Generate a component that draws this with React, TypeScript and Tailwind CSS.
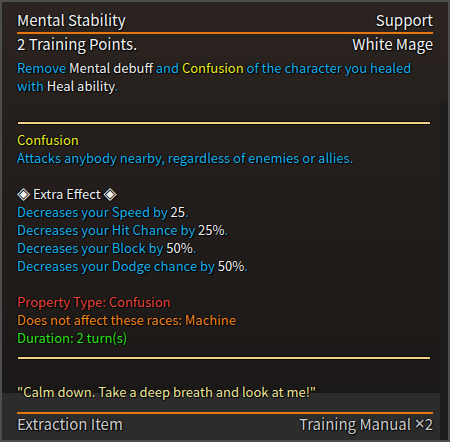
import React from 'react';

const C = {
  cyan: 'text-[#1ab2ea]',
  white: 'text-[#f2f2f2]',
  yellow: 'text-[#eeee22]',
};

const Line = ({ children, className = '' }: { children?: React.ReactNode; className?: string }) => (
  <div className={`h-[18px] leading-[18px] whitespace-nowrap ${className}`}>{children}</div>
);

const GoldRule = ({ className = '' }: { className?: string }) => (
  <div className={`h-[4px] mr-[2px] bg-[#0c0a09] p-[1px] ${className}`}>
    <div className="h-[2px] bg-[#f0d282]" />
  </div>
);

const Diamond = () => (
  <span className="font-['DejaVu_Sans',sans-serif] text-[17px] leading-none">◈</span>
);

const effects: [string, string][] = [
  ['Decreases your Speed by ', '25'],
  ['Decreases your Hit Chance by ', '25%'],
  ['Decreases your Block by ', '50%'],
  ['Decreases your Dodge chance by ', '50%'],
];

export default function App() {
  return (
    <div
      className="relative w-[450px] h-[442px] border-2 border-[#4d4d4d] bg-[linear-gradient(to_bottom,#2b2420_0px,#221d1b_200px,#1b1918_391px,#2c2c2c_391px)] font-['Noto_Sans_CJK_SC','Noto_Sans',sans-serif] text-[13px] [text-shadow:0_0_1px_#000,1px_1px_1px_#000,-1px_0_1px_#000] overflow-hidden"
    >
      <div className="flex flex-col pl-[15px] pr-[15px] pt-[8px]">
        {/* header */}
        <div className="flex justify-between h-[20px] leading-[20px] text-[15px] text-[#f4f4f4]">
          <span>Mental Stability</span>
          <span>Support</span>
        </div>
        <div className="h-[2px] mt-[2px] bg-[#e8760e]" />
        <div className="flex justify-between h-[20px] leading-[20px] text-[15px] text-[#f4f4f4]">
          <span>2 Training Points.</span>
          <span>White Mage</span>
        </div>

        <div className={`mt-[5px] ${C.cyan}`}>
          <Line>
            Remove <span className={C.white}>Mental debuff</span> and{' '}
            <span className={C.yellow}>Confusion</span> of the character you healed
          </Line>
          <Line>
            with <span className={C.white}>Heal ability</span>.
          </Line>
        </div>

        <GoldRule className="mt-[26px]" />

        <div className={`mt-[6px] ${C.cyan}`}>
          <Line className={C.yellow}>Confusion</Line>
          <Line>Attacks anybody nearby, regardless of enemies or allies.</Line>
          <Line />
          <Line className={C.white}>
            <Diamond /> Extra Effect <Diamond />
          </Line>
          {effects.map(([label, val]) => (
            <Line key={label}>
              {label}
              <span className={C.white}>{val}</span>.
            </Line>
          ))}
          <Line />
          <Line className="text-[#e8463c]">Property Type: Confusion</Line>
          <Line className="text-[#f0861c]">Does not affect these races: Machine</Line>
          <Line className="text-[#30e41c]">Duration: 2 turn(s)</Line>
        </div>

        <GoldRule className="mt-[9px]" />

        <Line className="mt-[23px] text-[#f0e89c]">"Calm down. Take a deep breath and look at me!"</Line>

        <div className="h-[2px] mt-[11px] bg-[#e8760e]" />
        <div className="flex justify-between h-[20px] leading-[20px] text-[15px] text-[#cdcdcd]">
          <span>Extraction Item</span>
          <span>
            Training Manual <span className="font-['Noto_Sans',sans-serif] text-[18px] leading-none">×</span>2
          </span>
        </div>
      </div>

      {/* scroll track */}
      <div className="absolute right-0 top-[100px] bottom-0 w-[8px] rounded-tl-[6px] bg-[#1d1d1d]" />
    </div>
  );
}
